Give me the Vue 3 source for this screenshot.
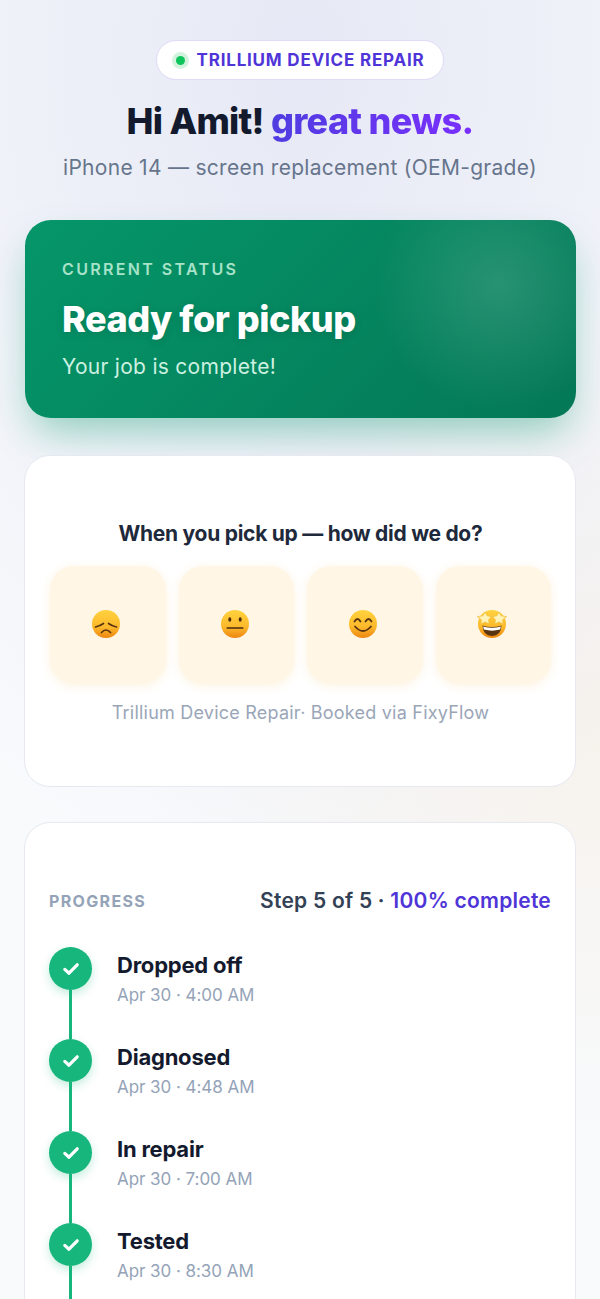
<script setup>
const steps = [
  { name: 'Dropped off', time: 'Apr 30 · 4:00 AM' },
  { name: 'Diagnosed', time: 'Apr 30 · 4:48 AM' },
  { name: 'In repair', time: 'Apr 30 · 7:00 AM' },
  { name: 'Tested', time: 'Apr 30 · 8:30 AM' }
]
const faces = ['sad', 'neutral', 'smile', 'stars']
</script>

<template>
  <main class="page">
    <header class="hero">
      <div class="pill"><span class="dot"></span>TRILLIUM DEVICE REPAIR</div>
      <h1 class="title">Hi Amit! <span class="accent">great news.</span></h1>
      <p class="sub">iPhone 14 — screen replacement (OEM-grade)</p>
    </header>

    <section class="status">
      <div class="eyebrow">CURRENT STATUS</div>
      <div class="headline">Ready for pickup</div>
      <div class="note">Your job is complete!</div>
    </section>

    <section class="card rating">
      <h2 class="ask">When you pick up — how did we do?</h2>
      <div class="faces">
        <button v-for="f in faces" :key="f" class="face" type="button">
          <svg width="30" height="30" viewBox="0 0 30 30" class="emoji">
            <defs>
              <linearGradient :id="'skin-' + f" x1="0" y1="0" x2="0" y2="1">
                <stop offset="0" stop-color="#ffd23f" />
                <stop offset="0.6" stop-color="#fdb92b" />
                <stop offset="1" stop-color="#ec8612" />
              </linearGradient>
            </defs>
            <circle cx="15" cy="15" r="14" :fill="'url(#skin-' + f + ')'" />
            <g v-if="f === 'sad'" fill="none" stroke="#5a3410" stroke-width="1.7" stroke-linecap="round">
              <path d="M4.5 18 Q9 17 12.5 14.5" />
              <path d="M25.5 18 Q21 17 17.5 14.5" />
              <path d="M10.5 23.5 Q15 18.5 19.5 23.5" />
            </g>
            <g v-else-if="f === 'neutral'">
              <ellipse cx="9.8" cy="10.5" rx="1.5" ry="2.2" fill="#4a2c0c" />
              <ellipse cx="20.2" cy="10.5" rx="1.5" ry="2.2" fill="#4a2c0c" />
              <path d="M7.2 19 H22.8" stroke="#4a2c0c" stroke-width="1.6" stroke-linecap="round" />
            </g>
            <g v-else-if="f === 'smile'" fill="none" stroke="#5a3410" stroke-width="1.8" stroke-linecap="round">
              <path d="M6.5 12.5 Q9.5 7.5 12.5 12.5" />
              <path d="M17.5 12.5 Q20.5 7.5 23.5 12.5" />
              <path d="M7 17.5 Q15 26.5 23 17.5" />
            </g>
            <g v-else>
              <path d="M5.5 16.5 Q15 19.5 24.5 16.5 Q24 27 15 27 Q6 27 5.5 16.5Z" fill="#5a3410" />
              <path d="M6.2 17.5 Q15 20.2 23.8 17.5 L23.2 20.5 Q15 22.8 6.8 20.5Z" fill="#fff" />
              <path d="M8 3 L10.2 6.8 L14.6 7.6 L11.6 10.8 L12.2 15 L8 13 L3.8 15 L4.4 10.8 L0.5 7.6 L5.8 6.8Z" fill="#fff3b8" stroke="#f1bf3c" stroke-width="0.8" stroke-linejoin="round" />
              <path d="M22 3 L24.2 6.8 L29.5 7.6 L25.6 10.8 L26.2 15 L22 13 L17.8 15 L18.4 10.8 L15.4 7.6 L19.8 6.8Z" fill="#fff3b8" stroke="#f1bf3c" stroke-width="0.8" stroke-linejoin="round" />
            </g>
          </svg>
        </button>
      </div>
      <p class="foot">Trillium Device Repair· Booked via FixyFlow</p>
    </section>

    <section class="card progress">
      <div class="progress-head">
        <span class="label">PROGRESS</span>
        <span class="count">Step 5 of 5 · <span class="pct">100% complete</span></span>
      </div>
      <ol class="steps">
        <li v-for="s in steps" :key="s.name" class="step">
          <span class="node">
            <svg width="20" height="20" viewBox="0 0 20 20" fill="none">
              <path d="M3.8 10.4 L8 14.2 L16.2 5.8" stroke="#fff" stroke-width="3.2" stroke-linecap="round" stroke-linejoin="round" />
            </svg>
          </span>
          <div class="step-text">
            <div class="step-name">{{ s.name }}</div>
            <div class="step-time">{{ s.time }}</div>
          </div>
        </li>
      </ol>
    </section>
  </main>
</template>

<style>
html, body { margin: 0; }
</style>

<style scoped>
.page {
  box-sizing: border-box;
  width: 600px;
  height: 1299px;
  overflow: hidden;
  padding: 40px 24px 0;
  font-family: Inter, "Liberation Sans", sans-serif;
  background:
    radial-gradient(560px 840px at 50% 60px, #e6e8f5 0%, rgba(230,232,245,0) 100%),
    radial-gradient(460px 420px at 100% 720px, #f7f2ec 0%, rgba(247,242,236,0) 100%),
    #f8fafc;
}
.hero { display: flex; flex-direction: column; align-items: center; }
.pill {
  box-sizing: border-box;
  height: 40px;
  width: 288px;
  padding-right: 4px;
  display: flex;
  align-items: center;
  justify-content: center;
  gap: 8px;
  background: #fff;
  border: 1.5px solid #dedbf8;
  border-radius: 20px;
  color: #4f35d8;
  font-size: 17px;
  font-weight: 700;
  letter-spacing: 0.8px;
}
.dot {
  width: 9px;
  height: 9px;
  border-radius: 50%;
  background: #10c45c;
  box-shadow: 0 0 0 4px #d3f3df;
  margin: 0 4px;
}
.title {
  margin: 17px 0 0;
  font-size: 36px;
  line-height: 48px;
  font-weight: 800;
  letter-spacing: -0.72px;
  color: #141a2e;
}
.accent {
  background: linear-gradient(90deg, #4f3de0, #7a2ffc);
  -webkit-background-clip: text;
  background-clip: text;
  color: transparent;
}
.sub {
  margin: 8px 0 0;
  font-size: 21px;
  line-height: 30px;
  letter-spacing: 0.28px;
  color: #66758c;
}
.status {
  box-sizing: border-box;
  height: 198px;
  margin: 37px 0.5px 0;
  padding: 38px 37.5px 0;
  border-radius: 26px;
  color: #fff;
  background:
    radial-gradient(125px 125px at 86% 33%, rgba(255,255,255,0.14), rgba(255,255,255,0) 100%),
    linear-gradient(135deg, #059669 0%, #047857 100%);
  box-shadow: 0 20px 40px -8px rgba(5,150,105,0.42);
}
.eyebrow {
  font-size: 16px;
  line-height: 22px;
  font-weight: 600;
  letter-spacing: 2.35px;
  color: #a7e3c9;
}
.headline {
  margin-top: 15px;
  font-size: 36px;
  line-height: 48px;
  font-weight: 800;
  letter-spacing: -0.47px;
  text-shadow: 0 2px 8px rgba(0,0,0,0.12);
}
.note {
  margin-top: 9px;
  font-size: 21px;
  line-height: 30px;
  letter-spacing: 0.28px;
  color: #cdf1e0;
}
.card {
  box-sizing: border-box;
  background: #fff;
  border: 1px solid #e6e9f0;
  border-radius: 26px;
}
.rating {
  height: 332px;
  margin-top: 37px;
  padding: 62px 24px 0 25px;
  text-align: center;
}
.ask {
  margin: 0;
  font-size: 21px;
  line-height: 32px;
  font-weight: 700;
  letter-spacing: -0.27px;
  color: #1e293b;
}
.faces {
  margin-top: 16px;
  display: grid;
  grid-template-columns: repeat(4, 1fr);
  gap: 13px;
}
.face {
  height: 118px;
  padding: 0 3px 3px 0;
  border: 0;
  border-radius: 24px;
  background: #fff6e6;
  box-shadow: 0 2px 10px rgba(245,200,120,0.22);
  display: flex;
  align-items: center;
  justify-content: center;
}
.foot {
  margin: 16px 0 0;
  font-size: 18px;
  line-height: 26px;
  letter-spacing: 0.22px;
  color: #9aa6b8;
}
.progress {
  height: 600px;
  margin-top: 35px;
  padding: 64px 24px 0 24px;
}
.progress-head {
  display: flex;
  justify-content: space-between;
  align-items: center;
}
.label {
  font-size: 16px;
  font-weight: 700;
  letter-spacing: 1.35px;
  color: #94a3b8;
}
.count {
  font-size: 21px;
  line-height: 28px;
  font-weight: 600;
  letter-spacing: 0.24px;
  color: #334155;
}
.pct { color: #4f35d8; }
.steps {
  list-style: none;
  margin: 32px 0 0;
  padding: 0;
  display: flex;
  flex-direction: column;
}
.step {
  position: relative;
  display: flex;
  gap: 25px;
  height: 92px;
}
.step::after {
  content: "";
  position: absolute;
  left: 20px;
  top: 43px;
  bottom: 0;
  width: 3px;
  background: #17b67c;
}
.node {
  flex: none;
  width: 43px;
  height: 43px;
  border-radius: 50%;
  background: #17b67c;
  box-shadow: 0 4px 10px rgba(23,182,124,0.25);
  display: flex;
  align-items: center;
  justify-content: center;
}
.step-text { padding-top: 3px; }
.step-name {
  font-size: 22px;
  line-height: 30px;
  font-weight: 700;
  color: #141a2e;
  letter-spacing: -0.22px;
}
.step-time {
  margin-top: 4px;
  font-size: 17px;
  line-height: 22px;
  letter-spacing: -0.05px;
  color: #94a3b8;
}
</style>
